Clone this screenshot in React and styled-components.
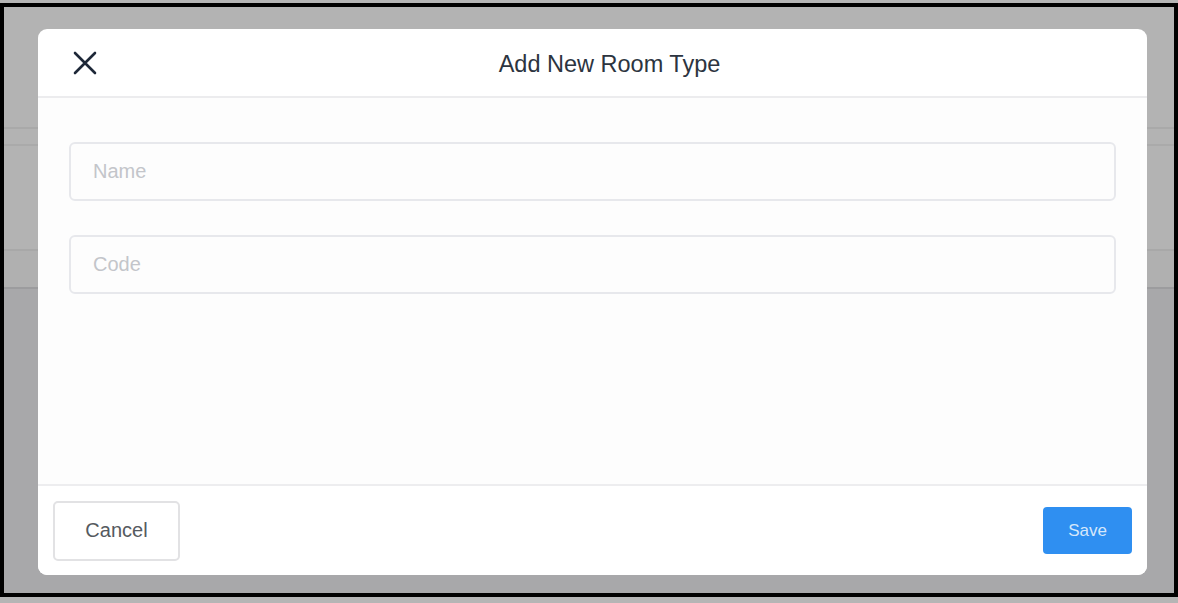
import React from 'react';
import styled, { createGlobalStyle } from 'styled-components';

const GlobalStyle = createGlobalStyle`
    html, body{
        margin: 0;
        padding: 0;
        background: #b5b5b5;
        font-family: "Liberation Sans", Arial, sans-serif;
    }
`;

const Frame = styled('div')`
    margin-top: 3px;
    height: 594px;
    box-sizing: border-box;
    border: 4px solid #000;
    position: relative;
    overflow: hidden;
`;

// the page behind the backdrop
const Page = styled('div')`
    display: flex;
    flex-direction: column;
    height: 100%;
    background: #a8a8aa;
`;
const PageRow = styled('div')`
    height: ${p => p.h}px;
    background: ${p => p.bg || '#b3b3b3'};
    border-bottom: ${p => p.line ? `2px solid ${p.line}` : 'none'};
`;

const Modal = styled('div')`
    position: absolute;
    left: 34px;
    right: 27px;
    top: 22px;
    bottom: 18px;
    background: #fff;
    border-radius: 9px;
    display: flex;
    flex-direction: column;
    overflow: hidden;
`;
const Header = styled('div')`
    height: 67px;
    flex: none;
    display: flex;
    align-items: center;
    justify-content: center;
    position: relative;
    border-bottom: 2px solid #ececee;
`;
const CloseButton = styled('button')`
    position: absolute;
    left: 33px;
    top: 20px;
    width: 28px;
    height: 28px;
    padding: 0;
    border: none;
    background: none;
    display: flex;
    align-items: center;
    justify-content: center;
    cursor: pointer;
`;
const Title = styled('div')`
    font-size: 23.5px;
    color: #2c3440;
    margin: 3px 0 0 34px;
`;
const Body = styled('div')`
    flex: 1;
    background: #fdfdfd;
    padding: 44px 31px 0;
    display: flex;
    flex-direction: column;
    gap: 34px;
`;
const Input = styled('input')`
    height: 59px;
    box-sizing: border-box;
    border: 2px solid #e7e8ec;
    border-radius: 6px;
    background: #fdfdfd;
    padding: 0 22px;
    font-family: inherit;
    font-size: 20px;
    color: #333;
    outline: none;
    &::placeholder{
        color: #c3c5ca;
    }
`;
const Footer = styled('div')`
    flex: none;
    height: 91px;
    box-sizing: border-box;
    border-top: 2px solid #ededef;
    padding: 0 15px;
    display: flex;
    align-items: center;
    justify-content: space-between;
    background: #fff;
`;
const CancelButton = styled('button')`
    width: 127px;
    height: 60px;
    background: #fff;
    border: 2px solid #e2e2e4;
    border-radius: 5px;
    font-family: inherit;
    font-size: 20px;
    color: #555a60;
    cursor: pointer;
`;
const SaveButton = styled('button')`
    width: 89px;
    height: 47px;
    background: #2f8ff1;
    border: none;
    border-radius: 4px;
    font-family: inherit;
    font-size: 17px;
    color: #d6e7fb;
    cursor: pointer;
`;

const CloseIcon = () => (
    <svg width="24" height="24" viewBox="0 0 24 24" fill="none" stroke="#1e2838" strokeWidth="2.6" strokeLinecap="round">
        <path d="M2 2 L22 22 M22 2 L2 22" />
    </svg>
);

export default function App(){
    return(
        <>
            <GlobalStyle />
            <Frame>
                <Page>
                    <PageRow h={120} line="#a9a9a9" />
                    <PageRow h={15} line="#aaaaaa" />
                    <PageRow h={103} line="#a8a8a8" />
                    <PageRow h={36} bg="#b0b0b0" line="#9c9c9e" />
                </Page>
                <Modal>
                    <Header>
                        <CloseButton aria-label="Close"><CloseIcon /></CloseButton>
                        <Title>Add New Room Type</Title>
                    </Header>
                    <Body>
                        <Input placeholder="Name" />
                        <Input placeholder="Code" />
                    </Body>
                    <Footer>
                        <CancelButton>Cancel</CancelButton>
                        <SaveButton>Save</SaveButton>
                    </Footer>
                </Modal>
            </Frame>
        </>
    );
}
